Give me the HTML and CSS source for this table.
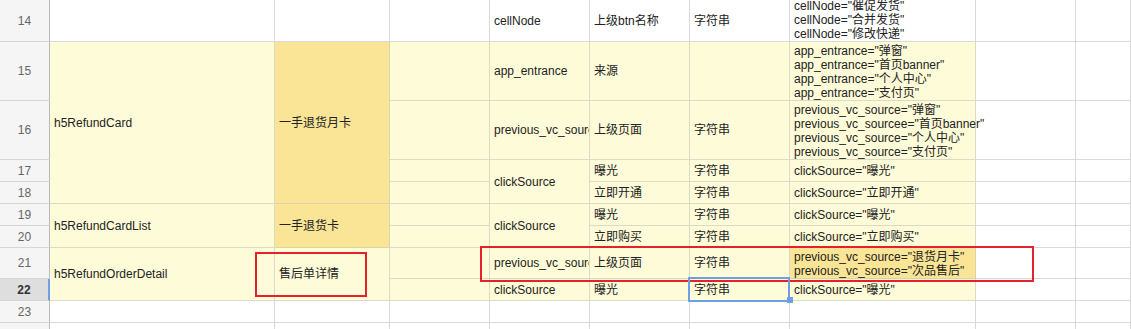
FILE: index.html
```html
<!DOCTYPE html>
<html lang="zh-CN">
<head>
<meta charset="utf-8">
<title>Sheet</title>
<link rel="stylesheet" href="styles.css">
</head>
<body>
<div class="sheet">
  <!-- row 14 -->
  <div class="h">14</div>
  <div class="c"></div>
  <div class="c"></div>
  <div class="c"></div>
  <div class="c">cellNode</div>
  <div class="c">上级btn名称</div>
  <div class="c">字符串</div>
  <div class="c multi"><div>cellNode="催促发货"<br>cellNode="合并发货"<br>cellNode="修改快递"</div></div>
  <div class="c e"></div>
  <div class="c e"></div>

  <!-- row 15 -->
  <div class="h">15</div>
  <div class="c y r4">h5RefundCard</div>
  <div class="c d r4">一手退货月卡</div>
  <div class="c y"></div>
  <div class="c y">app_entrance</div>
  <div class="c y">来源</div>
  <div class="c y"></div>
  <div class="c y multi"><div>app_entrance="弹窗"<br>app_entrance="首页banner"<br>app_entrance="个人中心"<br>app_entrance="支付页"</div></div>
  <div class="c e"></div>
  <div class="c e"></div>

  <!-- row 16 -->
  <div class="h">16</div>
  <div class="c y"></div>
  <div class="c y">previous_vc_source</div>
  <div class="c y">上级页面</div>
  <div class="c y">字符串</div>
  <div class="c y multi"><div>previous_vc_source="弹窗"<br>previous_vc_sourcee="首页banner"<br>previous_vc_source="个人中心"<br>previous_vc_source="支付页"</div></div>
  <div class="c e"></div>
  <div class="c e"></div>

  <!-- row 17 -->
  <div class="h">17</div>
  <div class="c y"></div>
  <div class="c y r2">clickSource</div>
  <div class="c y">曝光</div>
  <div class="c y">字符串</div>
  <div class="c y">clickSource="曝光"</div>
  <div class="c e"></div>
  <div class="c e"></div>

  <!-- row 18 -->
  <div class="h">18</div>
  <div class="c y"></div>
  <div class="c y">立即开通</div>
  <div class="c y">字符串</div>
  <div class="c y">clickSource="立即开通"</div>
  <div class="c e"></div>
  <div class="c e"></div>

  <!-- row 19 -->
  <div class="h">19</div>
  <div class="c y r2">h5RefundCardList</div>
  <div class="c d r2">一手退货卡</div>
  <div class="c y"></div>
  <div class="c y r2">clickSource</div>
  <div class="c y">曝光</div>
  <div class="c y">字符串</div>
  <div class="c y">clickSource="曝光"</div>
  <div class="c e"></div>
  <div class="c e"></div>

  <!-- row 20 -->
  <div class="h">20</div>
  <div class="c y"></div>
  <div class="c y">立即购买</div>
  <div class="c y">字符串</div>
  <div class="c y">clickSource="立即购买"</div>
  <div class="c e"></div>
  <div class="c e"></div>

  <!-- row 21 -->
  <div class="h">21</div>
  <div class="c y r2">h5RefundOrderDetail</div>
  <div class="c y r2">售后单详情</div>
  <div class="c y"></div>
  <div class="c y">previous_vc_source</div>
  <div class="c y">上级页面</div>
  <div class="c y">字符串</div>
  <div class="c d multi"><div>previous_vc_source="退货月卡"<br>previous_vc_source="次品售后"</div></div>
  <div class="c e"></div>
  <div class="c e"></div>

  <!-- row 22 -->
  <div class="h sel">22</div>
  <div class="c y"></div>
  <div class="c y">clickSource</div>
  <div class="c y">曝光</div>
  <div class="c y">字符串</div>
  <div class="c y">clickSource="曝光"</div>
  <div class="c e"></div>
  <div class="c e"></div>

  <!-- row 23 -->
  <div class="h">23</div>
  <div class="c"></div>
  <div class="c"></div>
  <div class="c"></div>
  <div class="c"></div>
  <div class="c"></div>
  <div class="c"></div>
  <div class="c"></div>
  <div class="c e"></div>
  <div class="c e"></div>

  <!-- row 24 -->
  <div class="h"></div>
  <div class="c"></div>
  <div class="c"></div>
  <div class="c"></div>
  <div class="c"></div>
  <div class="c"></div>
  <div class="c"></div>
  <div class="c"></div>
  <div class="c e"></div>
  <div class="c e"></div>

  <div class="mark mark-name"></div>
  <div class="mark mark-row"></div>
  <div class="selection"></div>
  <div class="handle"></div>
</div>
</body>
</html>
```
FILE: styles.css
```css
html, body {
  margin: 0;
  padding: 0;
  background: #ffffff;
}

body {
  width: 1131px;
  height: 329px;
  overflow: hidden;
  font-family: "Liberation Sans", Arial, "Noto Sans CJK SC", sans-serif;
  font-size: 12px;
  line-height: 14px;
  color: #222222;
}

.sheet {
  position: relative;
  display: grid;
  grid-template-columns: 50px 225px 115px 100px 100px 100px 100px 186px 100px 1fr;
  grid-template-rows: 42px 59px 59px 22px 22px 22px 22px 31px 22px 22px 22px;
}

.h {
  box-sizing: border-box;
  background: #f5f5f5;
  border-right: 1px solid #b9b9b9;
  border-bottom: 1px solid #d6d6d6;
  color: #666666;
  display: flex;
  align-items: center;
  justify-content: center;
}

.h.sel {
  background: #dedede;
  color: #333333;
  font-weight: bold;
  border-right: 2px solid #6d9fe1;
}

.c {
  box-sizing: border-box;
  border-right: 1px solid #d9d9d9;
  border-bottom: 1px solid #d9d9d9;
  padding: 0 4px;
  display: flex;
  align-items: center;
  white-space: nowrap;
  overflow: hidden;
  min-width: 0;
}

.c.y {
  background: #fefbd8;
  border-color: #dcdac4;
}

.c.d {
  background: #fae596;
  border-color: #dcd3a8;
}

.c.e {
  background: transparent;
}

.c.multi {
  align-items: flex-end;
  overflow: visible;
}

.r2 {
  grid-row: span 2;
}

.r4 {
  grid-row: span 4;
}

.mark {
  position: absolute;
  box-sizing: border-box;
  border: 2px solid #e5222b;
}

.mark-name {
  left: 255px;
  top: 252px;
  width: 112px;
  height: 45px;
}

.mark-row {
  left: 480px;
  top: 246px;
  width: 554px;
  height: 36px;
}

.selection {
  position: absolute;
  box-sizing: border-box;
  left: 688px;
  top: 277px;
  width: 102px;
  height: 25px;
  border: 2px solid #6d9fe1;
}

.handle {
  position: absolute;
  left: 787px;
  top: 297px;
  width: 6px;
  height: 6px;
  background: #6d9fe1;
}
```
